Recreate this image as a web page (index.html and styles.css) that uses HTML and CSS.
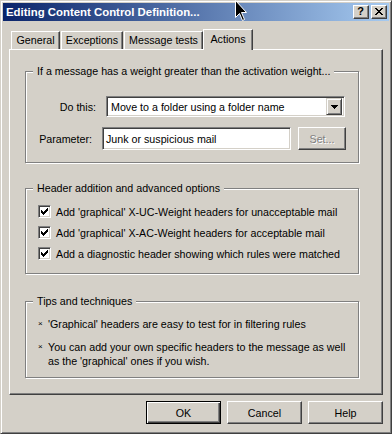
FILE: index.html
```html
<!DOCTYPE html>
<html>
<head>
<meta charset="utf-8">
<link rel="stylesheet" href="styles.css">
</head>
<body>
<div class="window">
  <div class="titlebar">
    <span class="title">Editing Content Control Definition...</span>
    <div class="capbtns">
      <span class="capbtn help">?</span>
      <span class="capbtn"><svg width="8" height="7" viewBox="0 0 8 7" shape-rendering="crispEdges"><path d="M0 0h2v1h-2zM6 0h2v1h-2zM1 1h2v1h-2zM5 1h2v1h-2zM2 2h4v1h-4zM3 3h2v1h-2zM2 4h4v1h-4zM1 5h2v1h-2zM5 5h2v1h-2zM0 6h2v1h-2zM6 6h2v1h-2z" fill="#000"/></svg></span>
    </div>
  </div>
  <div class="client">
    <div class="tabs">
      <div class="tab t-general">General</div>
      <div class="tab t-exc">Exceptions</div>
      <div class="tab t-msg">Message tests</div>
      <div class="tab t-act active">Actions</div>
    </div>
    <div class="panel">
      <div class="group g1">
        <div class="legend">If a message has a weight greater than the activation weight...</div>
        <div class="row r1">
          <span class="lbl l1">Do this:</span>
          <div class="combo">
            <span class="combo-text">Move to a folder using a folder name</span>
            <span class="dropbtn"><svg width="7" height="4" viewBox="0 0 7 4" shape-rendering="crispEdges"><path d="M0 0h7v1h-7zM1 1h5v1h-5zM2 2h3v1h-3zM3 3h1v1h-1z" fill="#000"/></svg></span>
          </div>
        </div>
        <div class="row r2">
          <span class="lbl l2">Parameter:</span>
          <div class="edit">Junk or suspicious mail</div>
          <div class="btn disabled setbtn">Set...</div>
        </div>
      </div>
      <div class="group g2">
        <div class="legend">Header addition and advanced options</div>
        <div class="checks">
          <div class="check"><span class="cb"><svg width="9" height="9" viewBox="0 0 9 9" shape-rendering="crispEdges"><path d="M7 1h1v1h-1zM6 2h2v1h-2zM1 3h1v1h-1zM5 3h3v1h-3zM1 4h2v1h-2zM4 4h3v1h-3zM1 5h5v1h-5zM2 6h3v1h-3zM3 7h1v1h-1z" fill="#000"/></svg></span><span class="ctext">Add 'graphical' X-UC-Weight headers for unacceptable mail</span></div>
          <div class="check"><span class="cb"><svg width="9" height="9" viewBox="0 0 9 9" shape-rendering="crispEdges"><path d="M7 1h1v1h-1zM6 2h2v1h-2zM1 3h1v1h-1zM5 3h3v1h-3zM1 4h2v1h-2zM4 4h3v1h-3zM1 5h5v1h-5zM2 6h3v1h-3zM3 7h1v1h-1z" fill="#000"/></svg></span><span class="ctext">Add 'graphical' X-AC-Weight headers for acceptable mail</span></div>
          <div class="check"><span class="cb"><svg width="9" height="9" viewBox="0 0 9 9" shape-rendering="crispEdges"><path d="M7 1h1v1h-1zM6 2h2v1h-2zM1 3h1v1h-1zM5 3h3v1h-3zM1 4h2v1h-2zM4 4h3v1h-3zM1 5h5v1h-5zM2 6h3v1h-3zM3 7h1v1h-1z" fill="#000"/></svg></span><span class="ctext">Add a diagnostic header showing which rules were matched</span></div>
        </div>
      </div>
      <div class="group g3">
        <div class="legend">Tips and techniques</div>
        <div class="tips">
          <div class="tip"><span class="bullet">×</span><span class="tiptext">'Graphical' headers are easy to test for in filtering rules</span></div>
          <div class="tip"><span class="bullet">×</span><span class="tiptext">You can add your own specific headers to the message as well<br>as the 'graphical' ones if you wish.</span></div>
        </div>
      </div>
    </div>
    <div class="buttons">
      <div class="btn default">OK</div>
      <div class="btn">Cancel</div>
      <div class="btn">Help</div>
    </div>
  </div>
  <svg class="cursor" width="13" height="22" viewBox="0 0 13 22"><path d="M0.5 0.5V17.5L4.5 13.5L7.5 20.5L9.5 19.5L6.5 12.5H11.5Z" fill="#000" stroke="#fff" stroke-width="1"/></svg>
</div>
</body>
</html>
```
FILE: styles.css
```css
* { box-sizing: border-box; }
html, body { margin: 0; padding: 0; }
body {
  font-family: "Liberation Sans", Arial, sans-serif;
  font-size: 10.7px;
  color: #000;
  background: #D4D0C8;
}
.window {
  position: relative;
  width: 392px;
  height: 434px;
  background: #D4D0C8;
  border: 1px solid;
  border-color: #D4D0C8 #404040 #404040 #D4D0C8;
  box-shadow: inset 1px 1px #fff, inset -1px -1px #808080;
  padding: 2px;
  display: flex;
  flex-direction: column;
}
.titlebar {
  height: 18px;
  flex: none;
  background: linear-gradient(to right, #0A246A, #A6CAF0);
  display: flex;
  align-items: center;
  justify-content: space-between;
  padding: 0 2px 0 3px;
}
.title {
  color: #fff;
  font-weight: bold;
  font-size: 11.4px;
  white-space: nowrap;
}
.capbtns { display: flex; gap: 2px; }
.capbtn {
  width: 16px;
  height: 14px;
  background: #D4D0C8;
  border: 1px solid;
  border-color: #fff #404040 #404040 #fff;
  box-shadow: inset -1px -1px #808080;
  display: flex;
  align-items: center;
  justify-content: center;
  padding-right: 1px;
  padding-bottom: 1px;
}
.capbtn.help {
  font-weight: bold;
  font-size: 11px;
  line-height: 1;
}
.client {
  flex: 1;
  padding: 8px 6px 0 6px;
  display: flex;
  flex-direction: column;
}
.tabs {
  display: flex;
  align-items: flex-end;
  height: 20px;
  padding-left: 2px;
  position: relative;
  z-index: 1;
  flex: none;
}
.tab {
  height: 18px;
  background: #D4D0C8;
  border-top: 1px solid #fff;
  border-left: 1px solid #fff;
  border-right: 1px solid #404040;
  box-shadow: inset -1px 0 #808080;
  display: flex;
  align-items: center;
  justify-content: center;
  white-space: nowrap;
  padding-bottom: 1px;
}
.t-general { width: 49px; margin-right: 1px; }
.t-exc { width: 62px; margin-right: 1px; }
.t-msg { width: 79px; }
.t-act { width: 50px; }
.tab.active {
  height: 21px;
  margin-bottom: -1px;
  padding-bottom: 3px;
}
.panel {
  height: 346px;
  flex: none;
  background: #D4D0C8;
  border: 1px solid;
  border-color: #fff #404040 #404040 #fff;
  box-shadow: inset -1px -1px #808080;
  padding: 0 0 0 15px;
  display: flex;
  flex-direction: column;
}
.group {
  width: 334px;
  border: 1px solid #808080;
  box-shadow: inset 1px 1px #fff, 1px 1px #fff;
  flex: none;
}
.g1 { margin-top: 21px; height: 92px; }
.g2 { margin-top: 25px; height: 86px; }
.g3 { margin-top: 27px; height: 77px; }
.legend {
  width: max-content;
  background: #D4D0C8;
  margin: -7px 0 0 7px;
  padding: 0 4px;
  height: 13px;
  line-height: 13px;
  white-space: nowrap;
}
.row {
  display: flex;
  align-items: center;
}
.r1 { margin-top: 18px; height: 21px; }
.r2 { margin-top: 10px; height: 23px; }
.lbl { text-align: right; margin-right: 10px; white-space: nowrap; }
.l1 { width: 70px; }
.l2 { width: 66px; }
.combo, .edit {
  background: #fff;
  border: 1px solid;
  border-color: #808080 #fff #fff #808080;
  box-shadow: inset 1px 1px #404040, inset -1px -1px #D4D0C8;
}
.combo {
  width: 239px;
  height: 21px;
  display: flex;
  align-items: center;
  justify-content: space-between;
  padding: 2px 2px 2px 4px;
}
.combo-text { white-space: nowrap; }
.dropbtn {
  width: 16px;
  height: 17px;
  background: #D4D0C8;
  border: 1px solid;
  border-color: #D4D0C8 #404040 #404040 #D4D0C8;
  box-shadow: inset 1px 1px #fff, inset -1px -1px #808080;
  display: flex;
  align-items: center;
  justify-content: center;
}
.edit {
  width: 189px;
  height: 23px;
  display: flex;
  align-items: center;
  padding-left: 3px;
  margin-right: 7px;
}
.btn {
  width: 75px;
  height: 23px;
  background: #D4D0C8;
  border: 1px solid;
  border-color: #fff #404040 #404040 #fff;
  box-shadow: inset -1px -1px #808080;
  display: flex;
  align-items: center;
  justify-content: center;
}
.btn.default {
  border-color: #000;
  box-shadow: inset 1px 1px #fff, inset -1px -1px #404040, inset -2px -2px #808080;
}
.btn.disabled {
  color: #808080;
  text-shadow: 1px 1px #fff;
}
.setbtn { width: 48px; }
.checks {
  margin: 10px 0 0 12px;
  display: flex;
  flex-direction: column;
  gap: 8px;
}
.check {
  display: flex;
  align-items: center;
  height: 13px;
  white-space: nowrap;
}
.cb {
  width: 13px;
  height: 13px;
  background: #fff;
  border: 1px solid;
  border-color: #808080 #fff #fff #808080;
  box-shadow: inset 1px 1px #404040, inset -1px -1px #D4D0C8;
  padding: 1px;
  display: flex;
  margin-right: 5px;
  flex: none;
}
.cb svg { display: block; }
.tips {
  margin: 9px 0 0 12px;
  display: flex;
  flex-direction: column;
  gap: 9px;
}
.tip {
  display: flex;
  line-height: 14px;
}
.bullet {
  width: 10px;
  font-size: 8px;
  flex: none;
}
.tiptext { white-space: nowrap; }
.buttons {
  display: flex;
  justify-content: flex-end;
  gap: 6px;
  margin-top: 6px;
  flex: none;
}
.cursor {
  position: absolute;
  left: 234px;
  top: -1px;
}
```
